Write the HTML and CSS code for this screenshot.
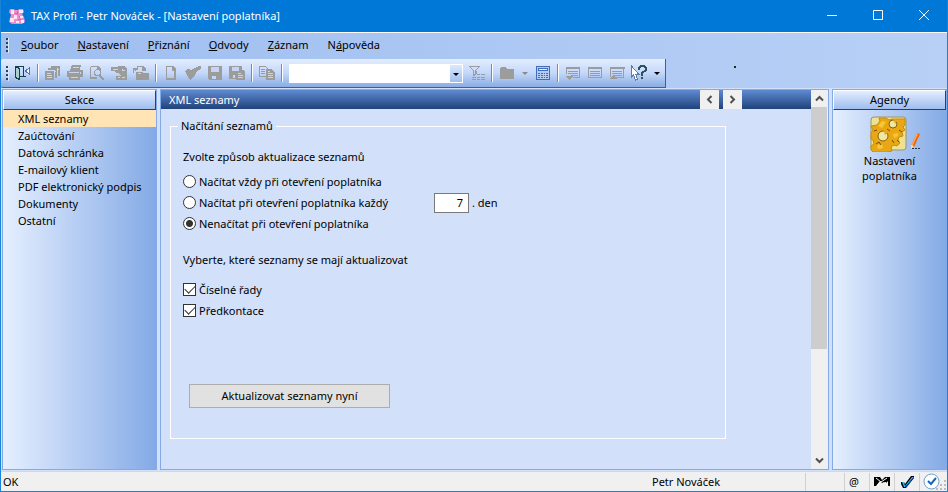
FILE: index.html
```
<!DOCTYPE html>
<html lang="cs">
<head>
  <meta charset="UTF-8" />
  <title>TAX Profi - Petr Nováček</title>
  <link rel="stylesheet" href="styles.css">
</head>
<body>
  <header class="titlebar">
    <svg class="app-icon" width="16" height="16" viewBox="0 0 16 16">
      <path fill="#f08cc8" d="M1 1h4l1 1h3l1-1h4l1 3-2 2 2 3 1 5-3 2H3L0 14l1-4 1-3-2-3z" />
      <g fill="#ffe6f4">
        <path d="M2 2h3v4H2zM10 2h4v3h-4zM1 10h4v4H1zM5 7h3v4H5zM11 8h3v2h-3zM7 13h3v2H7zM12 12h3v3h-3z" />
      </g>
      <path fill="none" stroke="#c96aae" d="M8.500 3v4M6 5.500h3M9 11.500h3M10.500 8v2" />
    </svg>
    <h1 class="title">TAX Profi - Petr Nováček - [Nastavení poplatníka]</h1>
    <div class="window-buttons">
      <button aria-label="Minimalizovat"><svg width="12" height="12"><path d="M1 5.500h10" /></svg></button>
      <button aria-label="Maximalizovat"><svg width="12" height="12"><path d="M1.500 .500h9v9h-9z" /></svg></button>
      <button aria-label="Zavřít"><svg width="12" height="12"><path d="M1 0l10 10M11 0L1 10" /></svg></button>
    </div>
  </header>

  <nav class="menu">
    <span class="grip"></span>
    <a href="#"><u>S</u>oubor</a>
    <a href="#"><u>N</u>astavení</a>
    <a href="#"><u>P</u>řiznání</a>
    <a href="#"><u>O</u>dvody</a>
    <a href="#"><u>Z</u>áznam</a>
    <a href="#">N<u>á</u>pověda</a>
  </nav>

  <div class="toolbar-row">
    <div class="toolbar">
      <span class="grip"></span>
      <button aria-label="Konec">
        <svg width="16" height="16">
          <path fill="#a9d0cf" stroke="#17404a" d="M.500 1.500l4 2v11l-4-2z" />
          <path fill="none" stroke="#17404a" d="M.500 1.500h8v10M5 11.500h6" />
          <path fill="#fff" stroke="#4a78b0" d="M14.500 2.500v7l-4-3.500z" />
        </svg>
      </button>
      <i class="sep"></i>
      <button disabled aria-label="Přehled">
        <svg width="16" height="16">
          <path d="M6 1h9v10h-2V3H6zM3 3h9v10h-2V5H3zM0 6h9v9H0z" />
          <path class="cut" d="M2 8.500h4M2 10.500h5M2 12.500h5M10 6.500h1M13 4.500h1" />
        </svg>
      </button>
      <button disabled aria-label="Tisk">
        <svg width="16" height="16">
          <path d="M5 0h9l-1 5h3v7h-3v3H2v-3H0V6h3z" />
          <path class="cut" d="M6 2.500h6M2 7.500h10M4 12.500h7M13.500 7v2" />
        </svg>
      </button>
      <button disabled aria-label="Náhled">
        <svg width="16" height="16">
          <path class="line" d="M1.500 1.500h7l3 3v2M1.500 1.500v12h6" />
          <path d="M8 1h1l3 3v1H8zM2 12h6v2H2z" />
          <circle class="line" cx="8.500" cy="7.500" r="3" />
          <path d="M10 9l5 4v2h-2l-4-4z" />
        </svg>
      </button>
      <button disabled aria-label="Export">
        <svg width="16" height="16">
          <path d="M0 2h6l1-1h6l3 3v11H5v-4h5L7 8H5L4 6H0z" />
          <path class="cut" d="M2 4.500h5M11 3.500v2h3M7 12.500h2M11 12.500h3" />
        </svg>
      </button>
      <button disabled aria-label="Archiv">
        <svg width="16" height="16">
          <path class="line" d="M4.500 5V1.500h5l2 2V6M2.500 6V3.500H0" />
          <path d="M9 1h2l2 3v2H9zM3 7h6l1 1h6v7H3zM0 3h4v2H1v3H0z" />
          <path class="cut" d="M5 8.500h3" />
        </svg>
      </button>
      <i class="sep"></i>
      <button disabled aria-label="Nový">
        <svg width="16" height="16">
          <path class="line" d="M3.500 1.500h6l3 3v10h-9z" />
          <path d="M9 1h1l3 3v2H9zM3 13h10v2H3zM11 5h2v9h-2z" />
        </svg>
      </button>
      <button disabled aria-label="Potvrdit">
        <svg width="16" height="16"><path d="M0 6l3-2 3 1 6-3 1-1h3v3l-3 1-3 5-4 5h-1l-3-5z" /></svg>
      </button>
      <button disabled aria-label="Uložit">
        <svg width="16" height="16">
          <path d="M1 1h14v14H2l-1-1z" />
          <path class="hole" d="M4 2h8v5H4zM5 11h4v3H5z" />
        </svg>
      </button>
      <button disabled aria-label="Uložit jako">
        <svg width="16" height="16">
          <path d="M0 1h13v4h1l2 2v8H7v-1H0z" />
          <path class="hole" d="M3 2h7v4H3zM4 10h2v3H4z" />
          <path class="cut" d="M9 8.500h3M9 10.500h5M9 12.500h5" />
        </svg>
      </button>
      <i class="sep"></i>
      <button disabled aria-label="Kopírovat">
        <svg width="16" height="16">
          <path class="line" d="M.500 1.500h6l2 2v8h-8z" />
          <path class="line" d="M2 4.500h4M2 6.500h4M2 8.500h4" />
          <path d="M7 4h5l4 3v8H7z" />
          <path class="cut" d="M9 6.500h2M9 8.500h5M9 10.500h5M9 12.500h5" />
        </svg>
      </button>
      <i class="sep"></i>
      <span class="combo"><select aria-label="Hledat"><option></option></select></span>
      <button disabled aria-label="Filtr">
        <svg width="16" height="16">
          <path class="line" d="M.500 1.500h10l-4 4v4l-2 1v-5z" />
          <path d="M6 6h2v3H6zM0 1h11v1H0zM8 9h3v1H8zM12 9h4v1h-4zM3 12h4v1H3zM8 12h3v1H8zM12 12h4v1h-4zM3 14h4v1H3zM8 14h3v1H8zM12 14h4v1h-4z" />
        </svg>
      </button>
      <i class="sep"></i>
      <button disabled aria-label="Složka">
        <svg width="16" height="16"><path d="M1 3l1-1h4l2 2h6l1 1v9H1z" /></svg>
      </button>
      <button class="drop" disabled aria-label="Další složky"></button>
      <button aria-label="Kalkulačka">
        <svg width="16" height="16">
          <rect x="1.500" y="1.500" width="13" height="13" rx="1" fill="#b4cbf3" stroke="#3f6dbb" />
          <path fill="#3f6dbb" d="M3 3h10v3H3zM3 8h2v1H3zM6 8h2v1H6zM9 8h1v1H9zM11 8h2v1h-2zM3 10h2v1H3zM6 10h2v1H6zM9 10h1v1H9zM11 10h2v1h-2zM3 12h2v1H3zM6 12h2v1H6zM9 12h1v1H9zM11 12h2v1h-2z" />
          <path fill="#e6efff" d="M4 4h8v1H4z" />
        </svg>
      </button>
      <i class="sep"></i>
      <button disabled aria-label="Poznámka dole">
        <svg width="16" height="16">
          <path class="line" d="M1.500 9V2.500h13v10H8" />
          <path d="M1 2h14v2H1zM3 6h10v1H3zM3 8h10v1H3zM6 10h7v1H6zM0 11h8l-4 4z" />
        </svg>
      </button>
      <button disabled aria-label="Poznámka">
        <svg width="16" height="16">
          <path class="line" d="M1.500 2.500h13v10h-13z" />
          <path d="M1 2h14v2H1zM3 6h10v1H3zM3 8h10v1H3zM3 10h10v1H3z" />
        </svg>
      </button>
      <button disabled aria-label="Poznámka nahoře">
        <svg width="16" height="16">
          <path class="line" d="M1.500 12V2.500h13v10H7" />
          <path d="M1 2h15v2H1zM3 6h10v1H3zM3 8h10v1H3zM5 10h8v1H5zM0 14l4-4 4 4z" />
        </svg>
      </button>
      <button aria-label="Nápověda">
        <svg width="18" height="16">
          <path fill="none" stroke="#2c5560" stroke-width="2" d="M9 5V3l2-2h3l2 2v2l-4 3v3" />
          <path fill="#2c5560" d="M11 12h2v2h-2z" />
          <path fill="#fff" stroke="#5b7fa6" d="M1.500 1v11l2-2 2 5 2-1-2-5h3z" />
        </svg>
      </button>
      <button class="drop" aria-label="Další nápověda"></button>
    </div>
    <span class="dot"></span>
  </div>

  <div class="workspace">
    <aside class="panel sections">
      <h2 class="panel-head">Sekce</h2>
      <ul>
        <li class="active"><a href="#">XML seznamy</a></li>
        <li><a href="#">Zaúčtování</a></li>
        <li><a href="#">Datová schránka</a></li>
        <li><a href="#">E-mailový klient</a></li>
        <li><a href="#">PDF elektronický podpis</a></li>
        <li><a href="#">Dokumenty</a></li>
        <li><a href="#">Ostatní</a></li>
      </ul>
    </aside>

    <main class="panel content">
      <div class="page">
        <div class="page-head">
          <h2>XML seznamy</h2>
          <button aria-label="Předchozí"><svg width="9" height="9"><path d="M6.500 1L3 4.500 6.500 8" /></svg></button>
          <button aria-label="Další"><svg width="9" height="9"><path d="M2.500 1L6 4.500 2.500 8" /></svg></button>
        </div>
        <form>
          <fieldset>
            <legend>Načítání seznamů</legend>
            <p>Zvolte způsob aktualizace seznamů</p>
            <div class="options">
              <div class="row">
                <input type="radio" name="mode" id="always">
                <label for="always">Načítat vždy při otevření poplatníka</label>
              </div>
              <div class="row">
                <input type="radio" name="mode" id="every">
                <label for="every" class="every">Načítat při otevření poplatníka každý</label>
                <input type="text" id="days" value="7">
                <label for="days">. den</label>
              </div>
              <div class="row">
                <input type="radio" name="mode" id="never" checked>
                <label for="never">Nenačítat při otevření poplatníka</label>
              </div>
            </div>
            <p>Vyberte, které seznamy se mají aktualizovat</p>
            <div class="options lists">
              <div class="row">
                <input type="checkbox" id="series" checked>
                <label for="series">Číselné řady</label>
              </div>
              <div class="row">
                <input type="checkbox" id="presets" checked>
                <label for="presets">Předkontace</label>
              </div>
            </div>
            <button type="button" class="update">Aktualizovat seznamy nyní</button>
          </fieldset>
        </form>
      </div>
      <div class="scrollbar">
        <button aria-label="Nahoru"><svg width="9" height="9"><path d="M1 6.500L4.500 3 8 6.500" /></svg></button>
        <div class="track"><div class="thumb"></div></div>
        <button aria-label="Dolů"><svg width="9" height="9"><path d="M1 2.500L4.500 6 8 2.500" /></svg></button>
      </div>
    </main>

    <aside class="panel agendas">
      <h2 class="panel-head">Agendy</h2>
      <a href="#" class="agenda">
        <svg width="52" height="36" viewBox="0 0 52 36">
          <rect x="1" y="1" width="35" height="33" rx="3" fill="#ece293" stroke="#9a9468" />
          <path fill="#e9a813" stroke="#c48d10" d="M1 17l2-3-2-4 6-1 3-4-1-3h7l3 2 3-1h13v6l-2 2 2 3-3 2 1 4-4 1-1 3 2 3-3 3-3-1-3 2 1 4-5 1H3l-2-2v-4l3-2-1-4-2-1z" />
          <path fill="#f8c637" d="M8 10l4-5 4 1-4 6zM23 18l5-1v3l-4 2zM7 29l5-1 1 4-5 1z" />
          <path fill="none" stroke="#6e4e0c" d="M6 28l3-2 2 3M22 24l2 3M17 13l3 2M4 15l3-1M29 14l3 2M27 24l2 2" />
          <circle cx="23" cy="8" r="4" fill="#f0e7a4" stroke="#86610c" />
          <circle cx="13" cy="20" r="5" fill="#f0e7a4" stroke="#86610c" />
          <path fill="#e9a813" d="M23 3l5 1-3 4zM13 13l6 3-4 3z" />
          <path fill="#f0640c" d="M47 17l3 1-6 13-3-1z" />
          <path fill="#ffab52" d="M47 17l1 1-6 13-1-1z" />
          <path fill="#f2dfb2" d="M41 29l3 1-3 3z" />
          <path stroke="#27313f" stroke-dasharray="2 1" d="M42 32.500h9" />
        </svg>
        <span>Nastavení poplatníka</span>
      </a>
    </aside>
  </div>

  <footer class="status">
    <span class="message">OK</span>
    <span class="user">Petr Nováček</span>
    <span class="cell wide"></span>
    <span class="cell mail">@</span>
    <span class="cell">
      <svg width="16" height="10">
        <path fill="#000" d="M0 0h6l2 3 3-3h5v9h-2V4l-2 2-2-1-2 1-2-2-4 5H0z" />
        <path fill="none" stroke="#fff" d="M2 1l5 4 6-4M3 9l3-4M11 5l3 4" />
      </svg>
    </span>
    <span class="cell">
      <svg width="14" height="14">
        <path fill="#000" d="M1 7h3l1 2 6-8h3v2L6 13H3L1 9z" />
        <path fill="#18c8f4" d="M2 7h2l1 4 7-9h2L5 12H4z" />
        <path fill="none" stroke="#1838c8" d="M6 12l7-9" />
      </svg>
    </span>
    <span class="cell last">
      <svg width="17" height="17">
        <circle cx="8.500" cy="8.500" r="7.500" fill="#fff" stroke="#6f9cc6" />
        <path fill="none" stroke="#1667b8" stroke-width="2" d="M5 8l3 3 5-6" />
      </svg>
      <svg width="11" height="11" class="size-grip">
        <path fill="#bcbcbc" d="M8 0h2v2H8zM4 4h2v2H4zM8 4h2v2H8zM0 8h2v2H0zM4 8h2v2H4zM8 8h2v2H8z" />
      </svg>
    </span>
  </footer>
</body>
</html>
```
FILE: styles.css
```
* {
  box-sizing: border-box;
}

body {
  margin: 0;
  min-height: 100vh;
  display: flex;
  flex-direction: column;
  border: 1px solid #1883d7;
  border-top: none;
  background: linear-gradient(to right, #9ebef0, #b8d0f6);
  font: 11px/16px "Noto Sans", "Segoe UI", sans-serif;
  color: #000;
}

h1,
h2,
p,
ul,
form {
  margin: 0;
  padding: 0;
  font-size: 11px;
  font-weight: normal;
}

ul {
  list-style: none;
}

a {
  color: inherit;
  text-decoration: none;
}

button {
  padding: 0;
  border: none;
  background: none;
  font: inherit;
  color: inherit;
}

svg {
  display: block;
  flex: none;
}

/* title bar */

.titlebar {
  height: 33px;
  display: flex;
  align-items: center;
  padding-left: 8px;
  background: #0078d7;
  border-bottom: 1px solid #fff;
  color: #fff;
}

.title {
  flex: 1;
  margin-left: 6px;
}

.window-buttons {
  display: flex;
}

.window-buttons button {
  width: 46px;
  height: 32px;
  display: flex;
  align-items: center;
  justify-content: center;
}

.window-buttons path {
  fill: none;
  stroke: #fff;
}

/* menu and toolbar */

.grip {
  width: 3px;
  height: 15px;
  background: repeating-linear-gradient(to bottom, #27415e 0 2px, transparent 2px 4px);
  border-right: 1px solid #dce8fc;
}

.menu {
  height: 26px;
  display: flex;
  align-items: center;
  gap: 19px;
  padding: 0 5px 2px;
}

.menu .grip {
  margin-right: -7px;
}

.toolbar-row {
  display: flex;
  align-items: center;
}

.toolbar {
  height: 29px;
  display: flex;
  align-items: center;
  padding: 0 1px 0 5px;
  background: linear-gradient(#e3edff, #c4d8f9 50%, #88ace4);
  border-right: 1px solid #3b619c;
  border-bottom: 1px solid #3b619c;
  border-radius: 2px 0 0 2px;
}

.toolbar .grip {
  margin-right: 3px;
}

.toolbar button {
  width: 22px;
  height: 22px;
  display: flex;
  align-items: center;
  justify-content: center;
}

.toolbar svg {
  shape-rendering: crispEdges;
}

.toolbar button:disabled {
  fill: #9c9c9c;
}

.toolbar .line {
  fill: none;
  stroke: #9c9c9c;
}

.toolbar .cut {
  fill: none;
  stroke: #c4d6f4;
}

.toolbar .hole {
  fill: #c4d6f4;
}

.toolbar .drop {
  width: 14px;
}

.drop::before {
  content: "";
  border: 3px solid transparent;
  border-top-color: #000;
  border-bottom: none;
}

.drop:disabled::before {
  border-top-color: #8a8a8a;
}

.sep {
  width: 2px;
  height: 18px;
  margin: 0 3px;
  border-left: 1px solid #6a8ccb;
  border-right: 1px solid #fff;
}

.combo {
  position: relative;
  width: 174px;
  height: 19px;
  margin: 0 3px;
}

.combo select {
  appearance: none;
  width: 100%;
  height: 100%;
  border: 1px solid #fff;
  border-radius: 0;
  background: linear-gradient(#dce9ff, #9fbeef) right / 12px 100% no-repeat #fff;
}

.combo::after {
  content: "";
  position: absolute;
  right: 4px;
  top: 9px;
  border: 3px solid transparent;
  border-top-color: #000;
  border-bottom: none;
  pointer-events: none;
}

.dot {
  width: 2px;
  height: 2px;
  margin: 0 0 14px 68px;
  background: #222;
}

/* panels */

.workspace {
  flex: 1;
  display: flex;
  gap: 3px;
  padding: 1px 0 1px 1px;
  background: #d2e0f9;
}

.panel {
  border: 1px solid #84aae6;
}

.sections,
.agendas {
  flex: none;
  background: linear-gradient(to right, #e5efff, #84aae6);
}

.sections {
  width: 155px;
}

.agendas {
  width: 115px;
}

.panel-head {
  height: 20px;
  line-height: 18px;
  text-align: center;
  background: linear-gradient(#e3edff, #9fbdee);
  border: 1px solid #2b4068;
  border-top-color: #fff;
  border-left-color: #fff;
}

.sections li {
  height: 17px;
  padding-left: 15px;
  line-height: 17px;
  white-space: nowrap;
}

.sections .active {
  background: #ffe5b5;
}

.content {
  flex: 1;
  display: flex;
  background: #d2e0f9;
}

.page {
  flex: 1;
}

.page-head {
  height: 19px;
  display: flex;
  gap: 4px;
  padding: 0 69px 0 8px;
  background: linear-gradient(#5f8bd2, #20427a);
  color: #fff;
}

.page-head h2 {
  flex: 1;
  line-height: 19px;
}

.page-head button,
.scrollbar button {
  display: flex;
  align-items: center;
  justify-content: center;
  background: #f0f0f0;
}

.page-head button {
  width: 19px;
}

.page-head path,
.scrollbar path {
  fill: none;
  stroke: #505050;
  stroke-width: 2;
}

.scrollbar {
  width: 17px;
  display: flex;
  flex-direction: column;
  background: #f0f0f0;
}

.scrollbar button {
  width: 17px;
  height: 17px;
}

.track {
  flex: 1;
}

.thumb {
  width: 16px;
  height: 70%;
  background: #cdcdcd;
}

fieldset {
  width: 556px;
  min-height: 321px;
  margin: 9px 9px 0;
  padding: 14px 12px;
  border: 1px solid #fff;
}

legend {
  height: 16px;
  margin-left: -5px;
  padding: 0 3px;
}

fieldset p {
  line-height: 18px;
}

.options {
  margin: 5px 0 17px;
}

.options.lists {
  margin: 10px 0 63px;
}

.row {
  height: 21px;
  display: flex;
  align-items: center;
}

.row input[type="radio"],
.row input[type="checkbox"] {
  appearance: none;
  flex: none;
  width: 13px;
  height: 13px;
  margin: 0 3px 0 0;
  border: 1px solid #333;
  background: #fff;
}

.row input[type="radio"] {
  border-radius: 50%;
}

.row input[type="radio"]:checked {
  background: radial-gradient(#333 0 3px, #fff 4px);
}

.row input[type="checkbox"]:checked::before {
  content: "";
  display: block;
  width: 9px;
  height: 5px;
  margin: 2px 1px;
  border: solid #333;
  border-width: 0 0 1px 1px;
  transform: translateY(-1px) rotate(-45deg);
}

.every {
  width: 235px;
}

.row input[type="text"] {
  width: 35px;
  height: 20px;
  margin-right: 3px;
  padding: 0 5px;
  border: 1px solid #7a7a7a;
  font: inherit;
  text-align: right;
}

.update {
  display: block;
  width: 201px;
  height: 24px;
  margin-left: 6px;
  background: #e1e1e1;
  border: 1px solid #adadad;
}

.agenda {
  display: flex;
  flex-direction: column;
  align-items: center;
  padding: 6px 24px;
  line-height: 15px;
  text-align: center;
}

.agenda svg {
  margin: 0 -12px 1px 0;
}

/* status bar */

.status {
  height: 20px;
  display: flex;
  align-items: center;
  background: #f0f0f0;
  border-top: 1px solid #d7d7d7;
}

.message {
  flex: 1;
  padding-left: 2px;
}

.user {
  width: 153px;
}

.cell {
  width: 25px;
  height: 18px;
  display: flex;
  align-items: center;
  justify-content: center;
  border-left: 1px solid #d0d0d0;
}

.cell.wide {
  width: 39px;
}

.cell.mail {
  justify-content: flex-start;
  padding-left: 4px;
}

.cell.last {
  width: 28px;
  justify-content: flex-start;
  padding-left: 3px;
}

.size-grip {
  align-self: flex-end;
  margin-left: -4px;
}
```
